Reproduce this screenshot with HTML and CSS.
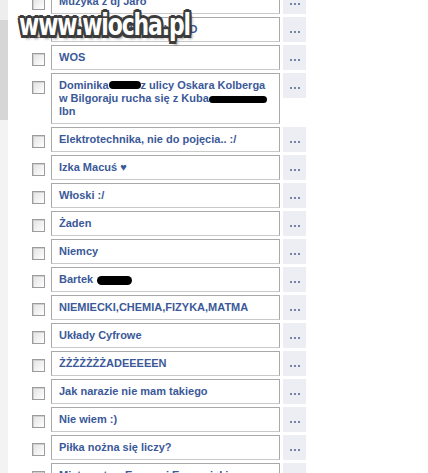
FILE: index.html
```html
<!DOCTYPE html>
<html lang="pl">
<head>
<meta charset="utf-8">
<link rel="stylesheet" href="styles.css">
</head>
<body>
<div class="page">
  <div class="gutter">
    <div class="gutter-top"></div>
    <div class="gutter-bottom"></div>
  </div>
  <div class="list">
    <div class="row"><span class="cb"></span><div class="box">Muzyka z dj Jaro</div><div class="more"><i></i><i></i><i></i></div></div>
    <div class="row"><span class="cb"></span><div class="box">Ważne, że jest zajebisty :D</div><div class="more"><i></i><i></i><i></i></div></div>
    <div class="row"><span class="cb"></span><div class="box">WOS</div><div class="more"><i></i><i></i><i></i></div></div>
    <div class="row"><span class="cb"></span><div class="box">Dominika<span class="blot b1"></span>z ulicy Oskara Kolberga w Bilgoraju rucha się z Kuba<span class="blot b2"></span><br>lbn</div><div class="more"><i></i><i></i><i></i></div></div>
    <div class="row"><span class="cb"></span><div class="box">Elektrotechnika, nie do pojęcia.. :/</div><div class="more"><i></i><i></i><i></i></div></div>
    <div class="row"><span class="cb"></span><div class="box">Izka Macuś ♥</div><div class="more"><i></i><i></i><i></i></div></div>
    <div class="row"><span class="cb"></span><div class="box">Włoski :/</div><div class="more"><i></i><i></i><i></i></div></div>
    <div class="row"><span class="cb"></span><div class="box">Żaden</div><div class="more"><i></i><i></i><i></i></div></div>
    <div class="row"><span class="cb"></span><div class="box">Niemcy</div><div class="more"><i></i><i></i><i></i></div></div>
    <div class="row"><span class="cb"></span><div class="box">Bartek <span class="blot b3"></span></div><div class="more"><i></i><i></i><i></i></div></div>
    <div class="row"><span class="cb"></span><div class="box">NIEMIECKI,CHEMIA,FIZYKA,MATMA</div><div class="more"><i></i><i></i><i></i></div></div>
    <div class="row"><span class="cb"></span><div class="box">Układy Cyfrowe</div><div class="more"><i></i><i></i><i></i></div></div>
    <div class="row"><span class="cb"></span><div class="box">ŻŻŻŻŻŻŻADEEEEEN</div><div class="more"><i></i><i></i><i></i></div></div>
    <div class="row"><span class="cb"></span><div class="box">Jak narazie nie mam takiego</div><div class="more"><i></i><i></i><i></i></div></div>
    <div class="row"><span class="cb"></span><div class="box">Nie wiem :)</div><div class="more"><i></i><i></i><i></i></div></div>
    <div class="row"><span class="cb"></span><div class="box">Piłka nożna się liczy?</div><div class="more"><i></i><i></i><i></i></div></div>
    <div class="row"><span class="cb"></span><div class="box">Mistrzostwa Europy i Europejski</div><div class="more"><i></i><i></i><i></i></div></div>
  </div>
</div>
<div class="watermark">www.wiocha.pl</div>
</body>
</html>
```

FILE: styles.css
```css
html, body {
  margin: 0;
  padding: 0;
  background: #ffffff;
  overflow: hidden;
}
body {
  width: 428px;
  height: 473px;
  position: relative;
  font-family: "Liberation Sans", Arial, sans-serif;
}
.page {
  display: flex;
  align-items: flex-start;
}
.gutter {
  width: 8px;
  flex: none;
  display: flex;
  flex-direction: column;
}
.gutter-top {
  height: 120px;
  background: linear-gradient(#eeeeee 0, #eeeeee 20px, #d6d6d6 20px, #d6d6d6 120px);
}
.gutter-bottom {
  height: 353px;
  background: #f3f3f3;
}
.list {
  margin-top: -11px;
  margin-left: 24px;
  display: flex;
  flex-direction: column;
  gap: 3px;
}
.row {
  display: flex;
  align-items: flex-start;
}
.cb {
  flex: none;
  width: 11px;
  height: 11px;
  margin-top: 8px;
  border: 1px solid #9c9c9c;
  background: linear-gradient(135deg, #e2e2e2, #ffffff);
  box-shadow: inset 1px 1px 0 #d0d0d0;
}
.box {
  flex: none;
  width: 213px;
  margin-left: 6px;
  padding: 5px 7px 5px 7px;
  border: 1px solid #a9a9a9;
  border-bottom-color: #c9c9c9;
  color: #3b5998;
  font-weight: bold;
  font-size: 11px;
  line-height: 13px;
  background: #ffffff;
}
.blot {
  display: inline-block;
  background: #000;
  border-radius: 5px;
  vertical-align: middle;
}
.b1 { width: 32px; height: 8px; margin-top: -2px; }
.b2 { width: 58px; height: 7px; margin-left: 0; }
.b3 { width: 35px; height: 9px; margin-left: 1px; }
.more {
  flex: none;
  width: 23px;
  height: 25px;
  margin-left: 3px;
  background: #eceef4;
  display: flex;
  justify-content: center;
  align-items: center;
  gap: 2px;
  padding-top: 4px;
  box-sizing: border-box;
}
.more i {
  width: 2px;
  height: 2px;
  background: #7585a8;
}
.watermark {
  position: absolute;
  left: 19px;
  top: 8px;
  font-family: "DejaVu Sans", sans-serif;
  font-weight: bold;
  font-size: 30px;
  line-height: 34px;
  letter-spacing: -1.5px;
  color: #ffffff;
  transform: scaleX(0.73);
  transform-origin: left top;
  text-shadow:
    -2.5px -2.5px 0 #3c3c3c, 2.5px -2.5px 0 #3c3c3c, -2.5px 2.5px 0 #3c3c3c, 2.5px 2.5px 0 #3c3c3c,
    0 -3px 0 #3c3c3c, 0 3px 0 #3c3c3c, -3px 0 0 #3c3c3c, 3px 0 0 #3c3c3c,
    4px 4px 3px rgba(0,0,0,0.35);
}
```
